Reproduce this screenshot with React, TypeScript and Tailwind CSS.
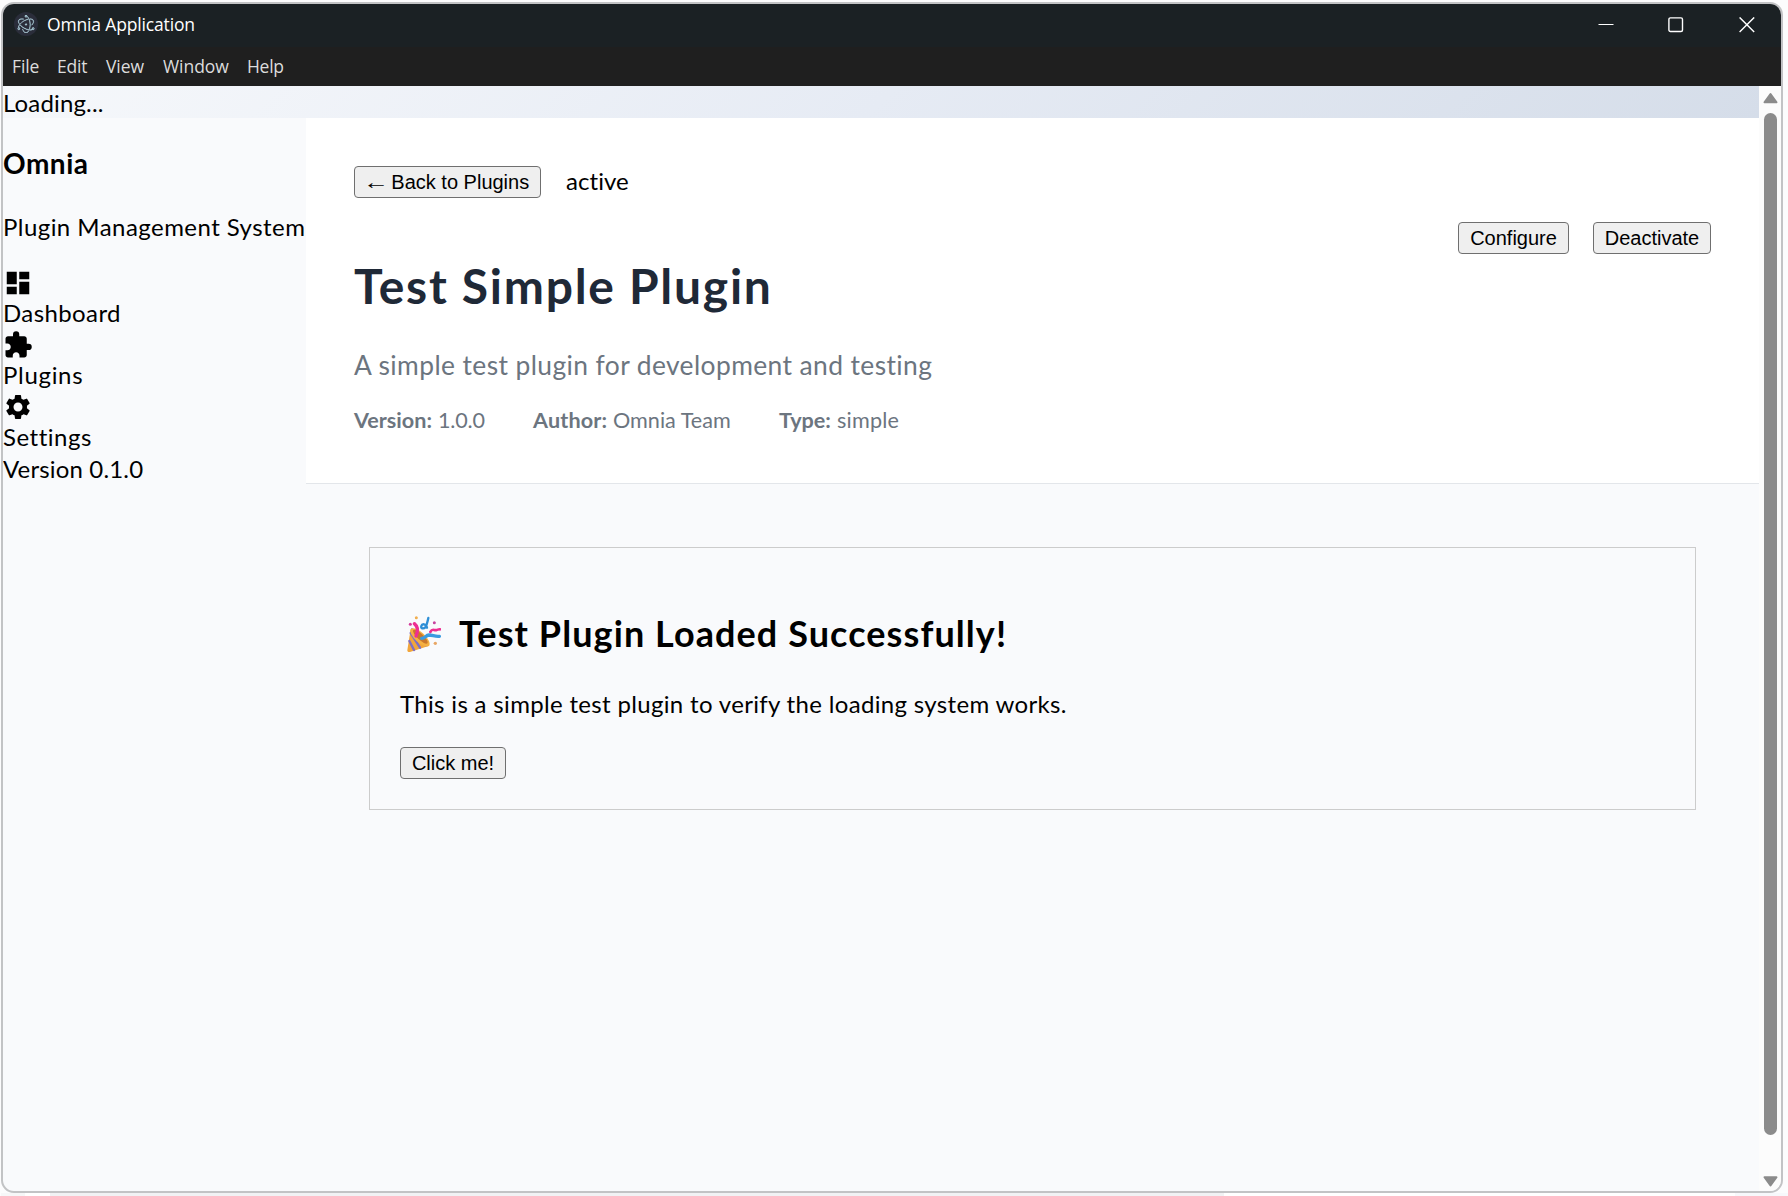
import type { ReactNode } from 'react';
import { MdDashboard, MdExtension, MdSettings } from 'react-icons/md';
import { SiElectron } from 'react-icons/si';

function NativeButton({ className, children }: { className: string; children: ReactNode }) {
  return (
    <button
      className={`h-8 shrink-0 whitespace-nowrap rounded-[4px] border border-[#6f6f6f] bg-[#efefef] pb-px text-center font-['Liberation_Sans',sans-serif] text-[20px] leading-[28px] text-black ${className}`}
    >
      {children}
    </button>
  );
}

function TitleBar() {
  return (
    <div className="flex h-[43px] items-start bg-[#1b2124] font-['Open_Sans',sans-serif] text-white">
      <span className="mt-2 ml-[11px] flex size-6 items-center justify-center rounded-full bg-[#2a2d3a] text-[#b9dbe6]">
        <SiElectron size={18} stroke="currentColor" strokeWidth={0.5} />
      </span>
      <span className="mt-1.5 ml-[9px] text-[17.5px] leading-7 tracking-[-0.16px]">Omnia Application</span>
      <div className="mt-[13px] mr-[26px] ml-auto flex gap-[54px]">
        <svg width="16" height="16" viewBox="0 0 16 16" fill="none" stroke="#fff" strokeWidth="1.2">
          <path d="M0.5 7.5h15" />
        </svg>
        <svg width="16" height="16" viewBox="0 0 16 16" fill="none" stroke="#fff" strokeWidth="1.4">
          <rect x="0.9" y="0.9" width="13.6" height="13.6" rx="1.5" />
        </svg>
        <svg className="ml-px" width="16" height="16" viewBox="0 0 16 16" fill="none" stroke="#fff" strokeWidth="1.4">
          <path d="M0.6 0.4 15.2 15M15.2 0.4 0.6 15" />
        </svg>
      </div>
    </div>
  );
}

function MenuBar() {
  return (
    <div className="flex h-[39px] bg-[#1f1f1f] pl-[9px] font-['Open_Sans',sans-serif] text-[17.5px] leading-[38px] text-[#dcdcdc]">
      <span className="w-[45px] tracking-[-0.1px]">File</span>
      <span className="w-[49px] tracking-[-0.2px]">Edit</span>
      <span className="w-[57px] tracking-[-0.1px]">View</span>
      <span className="w-[84px] tracking-[-0.05px]">Window</span>
      <span className="tracking-[-0.3px]">Help</span>
    </div>
  );
}

function Sidebar() {
  return (
    <aside className="flex w-[303px] shrink-0 flex-col whitespace-nowrap">
      <h3 className="mt-[26px] text-[28px] leading-[38px] font-bold tracking-[0.5px]">Omnia</h3>
      <p className="mt-[28px] text-[24px] leading-[33px] tracking-[0.45px]">Plugin Management System</p>
      <nav className="mt-[25px]">
        <MdDashboard className="block" size={30} />
        <div className="h-8 leading-[29px] tracking-[0.4px]">Dashboard</div>
        <MdExtension className="block" size={30} />
        <div className="h-8 leading-[29px] tracking-[0.7px]">Plugins</div>
        <MdSettings className="block" size={30} />
        <div className="h-8 leading-[29px] tracking-[0.5px]">Settings</div>
      </nav>
      <div className="h-8 leading-[29px] tracking-[0.16px]">Version 0.1.0</div>
    </aside>
  );
}

function PartyPopper() {
  return (
    <svg className="mr-[18px] ml-[7px] shrink-0" width="34" height="38" viewBox="21 42 102 114" fill="none" strokeLinecap="round">
      <path d="M32 84 22 148c0 5 4 6 8 5l58-19z" fill="#f2a63b" />
      <path d="M32 96 60 140M28 120 42 147" stroke="#7f6fc4" strokeWidth="7" />
      <path d="M36 84 78 134" stroke="#8b74b8" strokeWidth="5" />
      <ellipse cx="60" cy="109" rx="37" ry="15" transform="rotate(43 60 109)" fill="#f5b041" />
      <ellipse cx="61" cy="107" rx="29" ry="9" transform="rotate(43 61 107)" fill="#c9772c" />
      <path d="M43 68c10 8 12 22 5 37" stroke="#ee2f92" strokeWidth="10" />
      <path d="M85 51c-3 12-4 22-9 28-6 6-14 3-12-4s14-8 17 5" stroke="#2f8fd6" strokeWidth="7" />
      <path d="M91 93c7-13 11-3 19-6 4-1 6-3 10-2" stroke="#ee2f92" strokeWidth="8" />
      <path d="M65 112c10 0 12-9 22-10 10 0 20 6 31 4" stroke="#3a9be0" strokeWidth="10" />
      <circle cx="49" cy="50" r="4.5" fill="#f0ad4e" />
      <circle cx="31" cy="70" r="4.5" fill="#d63a9b" />
      <circle cx="103" cy="65" r="4.5" fill="#c7439f" />
      <circle cx="106" cy="127" r="5" fill="#e8a765" />
    </svg>
  );
}

function PluginHeader() {
  return (
    <header className="h-[366px] border-b border-[#e3e6ea] bg-white px-12 pt-12">
      <div className="flex items-start gap-[25px]">
        <NativeButton className="w-[187px]">
          <span className="inline-block scale-x-[1.3]">←</span> Back to Plugins
        </NativeButton>
        <span className="leading-[29px] tracking-[0.05px]">active</span>
      </div>
      <div className="mt-6 flex items-start justify-between">
        <div>
          <h1 className="mt-8 text-[48px] leading-[64px] font-bold tracking-[1.72px] text-[#1f2937]">
            Test Simple Plugin
          </h1>
          <p className="mt-[29px] text-[26.4px] leading-9 tracking-[0.4px] text-[#6c757f]">
            A simple test plugin for development and testing
          </p>
          <div className="mt-[22px] flex text-[21.6px] leading-[31px] text-[#6c757f]">
            <div className="w-[179px]">
              <strong className="inline-block w-[84px]">Version:</strong>
              <span className="tracking-[-0.2px]">1.0.0</span>
            </div>
            <div className="w-[246px]">
              <strong className="inline-block w-[80px] tracking-[0.15px]">Author:</strong>
              <span>Omnia Team</span>
            </div>
            <div>
              <strong className="inline-block w-[58px]">Type:</strong>
              <span className="tracking-[0.2px]">simple</span>
            </div>
          </div>
        </div>
        <div className="flex gap-6">
          <NativeButton className="w-[111px]">Configure</NativeButton>
          <NativeButton className="w-[118px]">Deactivate</NativeButton>
        </div>
      </div>
    </header>
  );
}

function PluginCard() {
  return (
    <section className="m-[63px] h-[263px] border border-[#cccccc] px-[30px] pt-[61px]">
      <h2 className="flex items-center text-[36px] leading-[49px] font-bold tracking-[1.08px]">
        <PartyPopper />
        <span>Test Plugin Loaded Successfully!</span>
      </h2>
      <p className="mt-[29px] leading-[33px] tracking-[0.33px]">
        This is a simple test plugin to verify the loading system works.
      </p>
      <NativeButton className="mt-[27px] block w-[106px]">Click me!</NativeButton>
    </section>
  );
}

function ScrollBar() {
  return (
    <div className="flex w-[22px] shrink-0 flex-col items-center bg-[#fcfcfc] pt-[6px]">
      <svg width="16" height="12" viewBox="0 0 16 12" fill="#8b8b8b" stroke="#8b8b8b" strokeWidth="2" strokeLinejoin="round">
        <path d="M8.5 2 14.5 10.3H2.5z" />
      </svg>
      <div className="mt-[9px] ml-px h-[1022px] w-[13px] rounded-full bg-[#8b8b8b]" />
      <svg className="mt-[40px]" width="16" height="12" viewBox="0 0 16 12" fill="#8b8b8b" stroke="#8b8b8b" strokeWidth="2" strokeLinejoin="round">
        <path d="M8.5 10.5 14.5 2.2H2.5z" />
      </svg>
    </div>
  );
}

export default function App() {
  return (
    <div className="h-[1196px] w-[1788px] overflow-hidden bg-[#fcfcfd] pt-[2px] pl-px">
      <div className="flex h-[1191px] w-[1782px] flex-col overflow-hidden rounded-[13px] border-2 border-[#c2c3c5] bg-[#f9fafc]">
        <TitleBar />
        <MenuBar />
        <div className="flex min-h-0 flex-1">
          <div className="flex min-w-0 flex-1 flex-col font-['Lato',sans-serif] text-[24px] text-black [font-variant-ligatures:none]">
            <div className="h-8 bg-linear-135 from-[#f6f8fb] via-[#e6ebf4] to-[#d5dde9] leading-[33px] tracking-[0.15px]">
              Loading...
            </div>
            <div className="flex flex-1">
              <Sidebar />
              <main className="min-w-0 flex-1">
                <PluginHeader />
                <PluginCard />
              </main>
            </div>
          </div>
          <ScrollBar />
        </div>
      </div>
      <div className="flex h-[3px]">
        <div className="h-full w-[24px] bg-[#f6f7f8]" />
        <div className="h-full w-[25px] bg-white" />
        <div className="h-full w-[1174px] bg-[#f1f2f4]" />
        <div className="h-full w-[511px] bg-white" />
        <div className="h-full flex-1 bg-[#f7f8fb]" />
      </div>
    </div>
  );
}
